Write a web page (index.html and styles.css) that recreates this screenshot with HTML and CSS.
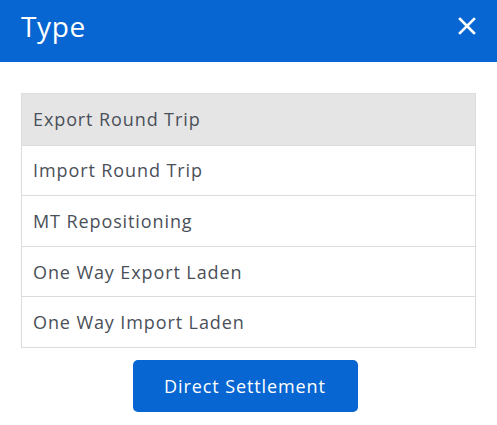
FILE: index.html
```html
<!DOCTYPE html>
<html>
<head>
<meta charset="utf-8">
<link rel="stylesheet" href="styles.css">
</head>
<body>
<div class="modal">
  <div class="modal-header">
    <h1 class="modal-title">Type</h1>
    <button class="close" aria-label="Close">
      <svg width="18" height="18" viewBox="0 0 18 18"><path d="M2 2L16 16M16 2L2 16" stroke="#fff" stroke-width="2.6" stroke-linecap="square"/></svg>
    </button>
  </div>
  <div class="modal-body">
    <ul class="list">
      <li class="item active">Export Round Trip</li>
      <li class="item">Import Round Trip</li>
      <li class="item">MT Repositioning</li>
      <li class="item">One Way Export Laden</li>
      <li class="item">One Way Import Laden</li>
    </ul>
    <div class="actions">
      <button class="btn">Direct Settlement</button>
    </div>
  </div>
</div>
</body>
</html>
```

FILE: styles.css
```css
* { box-sizing: border-box; }
html, body { margin: 0; padding: 0; background: #fff; }
body { font-family: "Open Sans", "Lato", sans-serif; }
.modal { width: 497px; }
.modal-header {
  height: 62px;
  background: #0766d1;
  display: flex;
  align-items: center;
  justify-content: space-between;
  padding: 0 21px 0 21px;
}
.modal-title {
  margin: 0;
  color: #fff;
  font-weight: 400;
  font-size: 28px;
  line-height: 1;
  padding-bottom: 10px;
  letter-spacing: 0.6px;
}
.close {
  background: none;
  border: 0;
  padding: 0;
  display: flex;
  margin-bottom: 10px;
}
.modal-body { padding: 31px 21px 0 21px; }
.list {
  list-style: none;
  margin: 0;
  padding: 0;
  border: 1px solid #dcdcdc;
}
.item {
  height: 50.6px;
  display: flex;
  align-items: center;
  padding: 0 11px;
  font-size: 18px;
  letter-spacing: 0.9px;
  color: #4a5059;
  border-top: 1px solid #dcdcdc;
}
.item:first-child { border-top: 0; }
.item.active { background: #e5e5e5; }
.actions { display: flex; justify-content: center; padding-top: 12px; }
.btn {
  width: 225px;
  height: 52px;
  background: #0766d1;
  color: #fff;
  border: 0;
  border-radius: 5px;
  font-family: inherit;
  font-size: 18px;
  letter-spacing: 0.9px;
  margin-left: -7px;
}
```
